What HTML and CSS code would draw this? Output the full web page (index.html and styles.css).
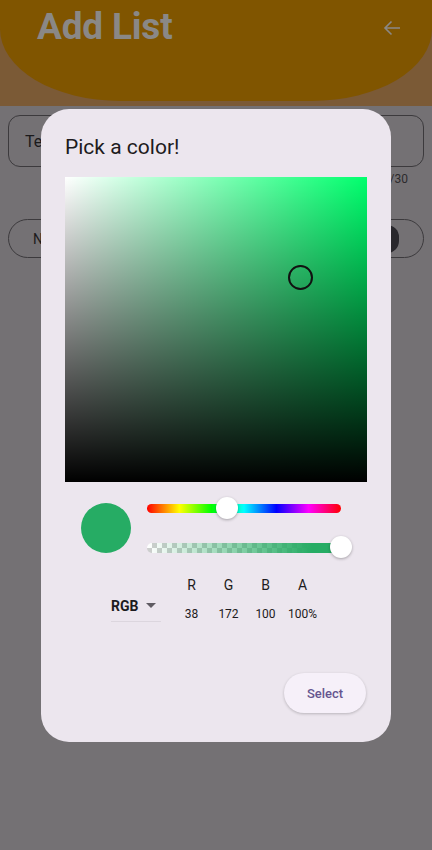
FILE: index.html
```html
<!DOCTYPE html>
<html lang="en">
<head>
<meta charset="utf-8">
<title>Add List</title>
<link rel="stylesheet" href="styles.css">
</head>
<body>
<div class="page">
  <header class="appbar">
    <div class="appbar-inner">
      <h1 class="title">Add List</h1>
      <svg class="back" width="20" height="20" viewBox="0 0 20 20"><path d="M18 10H3M9.5 3.5L3 10l6.5 6.5" fill="none" stroke="#8a8886" stroke-width="1.6"/></svg>
    </div>
  </header>
  <main class="form">
    <div class="field"><span>Te</span></div>
    <div class="counter">0/30</div>
    <div class="pill"><span>N</span><span class="knob"></span></div>
  </main>

  <div class="dialog">
    <h2 class="dialog-title">Pick a color!</h2>
    <div class="sv">
      <div class="sv-white"></div>
      <div class="sv-black"></div>
      <span class="sv-cursor"></span>
    </div>
    <div class="sliders-row">
      <div class="preview"></div>
      <div class="sliders">
        <div class="slider">
          <div class="track hue"></div>
          <span class="thumb thumb-hue"></span>
        </div>
        <div class="slider">
          <div class="track alpha"><div class="alpha-fill"></div></div>
          <span class="thumb thumb-alpha"></span>
        </div>
      </div>
    </div>
    <div class="values-row">
      <div class="mode">
        <span class="mode-label">RGB</span>
        <svg class="caret" width="10" height="6" viewBox="0 0 10 6"><path d="M0 0h10L5 5z" fill="#5f5b62"/></svg>
      </div>
      <div class="cols">
        <div class="col"><span class="lbl">R</span><span class="val">38</span></div>
        <div class="col"><span class="lbl">G</span><span class="val">172</span></div>
        <div class="col"><span class="lbl">B</span><span class="val">100</span></div>
        <div class="col"><span class="lbl">A</span><span class="val">100%</span></div>
      </div>
    </div>
    <div class="actions">
      <button class="select-btn">Select</button>
    </div>
  </div>
</div>
</body>
</html>
```

FILE: styles.css
```css
* { box-sizing: border-box; }
html, body { margin: 0; padding: 0; }
body {
  width: 432px;
  height: 850px;
  overflow: hidden;
  background: #747174;
  font-family: Roboto, "Noto Sans", sans-serif;
}
.page { position: relative; width: 432px; height: 850px; }

.appbar {
  height: 106px;
  background: #7b5a36;
}
.appbar-inner {
  height: 101px;
  background: #805500;
  border-radius: 0 0 120px 120px / 0 0 72px 72px;
  display: flex;
  align-items: flex-start;
  justify-content: space-between;
  padding: 7px 30px 0 37px;
}
.title {
  margin: 0;
  font-size: 37px;
  font-weight: 700;
  color: #8a8886;
  line-height: 40px;
  letter-spacing: -0.2px;
}
.back { margin-top: 11px; }

.form { padding: 9px 8px 0; }
.field {
  height: 52px;
  border: 1px solid #3c3a3d;
  border-radius: 12px;
  display: flex;
  align-items: center;
  padding-left: 16px;
  font-size: 16px;
  color: #1b1a1c;
}
.counter {
  text-align: right;
  font-size: 12px;
  color: #2c2a2d;
  padding-right: 16px;
  margin-top: 5px;
  line-height: 14px;
}
.pill {
  margin-top: 33px;
  height: 39px;
  border: 1px solid #3c3a3d;
  border-radius: 20px;
  display: flex;
  align-items: center;
  justify-content: space-between;
  padding: 0 24px 0 24px;
  font-size: 14px;
  color: #1b1a1c;
}
.knob {
  width: 30px;
  height: 28px;
  border-radius: 12px;
  background: #29272c;
}

.dialog {
  position: absolute;
  left: 41px;
  top: 109px;
  width: 350px;
  height: 633px;
  background: #ece6ee;
  border-radius: 28px;
  padding: 24px 24px 29px;
  display: flex;
  flex-direction: column;
}
.dialog-title {
  margin: 0;
  font-size: 21px;
  font-weight: 400;
  line-height: 28px;
  color: #1d1b20;
}
.sv {
  position: relative;
  margin-top: 16px;
  width: 302px;
  height: 305px;
  background: #00ff6d;
}
.sv-white {
  position: absolute; inset: 0;
  background: linear-gradient(to right, #ffffff, rgba(255,255,255,0));
}
.sv-black {
  position: absolute; inset: 0;
  background: linear-gradient(to bottom, rgba(0,0,0,0), #000000);
}
.sv-cursor {
  position: absolute;
  left: 223px;
  top: 88px;
  width: 25px;
  height: 25px;
  border: 2px solid #111;
  border-radius: 50%;
}

.sliders-row {
  margin-top: 6px;
  display: flex;
  align-items: center;
  padding-left: 16px;
  gap: 16px;
}
.preview {
  width: 50px;
  height: 50px;
  border-radius: 50%;
  background: rgb(38,172,100);
}
.sliders { width: 194px; display: flex; flex-direction: column; }
.slider {
  position: relative;
  height: 40px;
  display: flex;
  align-items: center;
}
.track { width: 100%; border-radius: 5px; }
.hue {
  height: 9px;
  background: linear-gradient(to right, #ff0000, #ffff00 16.7%, #00ff00 33.3%, #00ffff 50%, #0000ff 66.7%, #ff00ff 83.3%, #ff0000);
}
.alpha {
  height: 10px;
  position: relative;
  overflow: hidden;
  background-color: #ffffff;
  background-image:
    linear-gradient(45deg, #cfcfcf 25%, transparent 25%, transparent 75%, #cfcfcf 75%),
    linear-gradient(45deg, #cfcfcf 25%, transparent 25%, transparent 75%, #cfcfcf 75%);
  background-size: 10px 10px;
  background-position: 0 0, 5px 5px;
}
.alpha-fill {
  position: absolute; inset: 0;
  background: linear-gradient(to right, rgba(38,172,100,0), rgb(38,172,100) 85%);
}
.thumb {
  position: absolute;
  top: 50%;
  width: 22px;
  height: 22px;
  margin: -11px 0 0 -11px;
  border-radius: 50%;
  background: #ffffff;
  box-shadow: 0 1px 3px rgba(0,0,0,0.3);
}
.thumb-hue { left: 80px; top: 20px; }
.thumb-alpha { left: 194px; top: 19px; }

.values-row {
  margin-top: 8px;
  display: flex;
  justify-content: center;
  align-items: center;
  gap: 12px;
}
.mode {
  width: 50px;
  height: 32px;
  display: flex;
  align-items: center;
  gap: 8px;
  border-bottom: 1px solid #dcd6de;
  margin-top: 14px;
}
.mode-label {
  font-size: 14px;
  font-weight: 700;
  color: #1d1b20;
}
.caret { margin-top: 1px; }
.cols { display: flex; }
.col {
  width: 37px;
  display: flex;
  flex-direction: column;
  align-items: center;
  gap: 12px;
  color: #1d1b20;
}
.lbl { font-size: 14px; line-height: 18px; }
.val { font-size: 12px; line-height: 16px; }

.actions {
  margin-top: auto;
  display: flex;
  justify-content: flex-end;
  padding-right: 1px;
}
.select-btn {
  width: 82px;
  height: 40px;
  border: none;
  border-radius: 20px;
  background: #f6f0f9;
  box-shadow: 0 1px 3px rgba(0,0,0,0.22);
  color: #65558f;
  font-family: Roboto, sans-serif;
  font-size: 13px;
  font-weight: 500;
}
```
